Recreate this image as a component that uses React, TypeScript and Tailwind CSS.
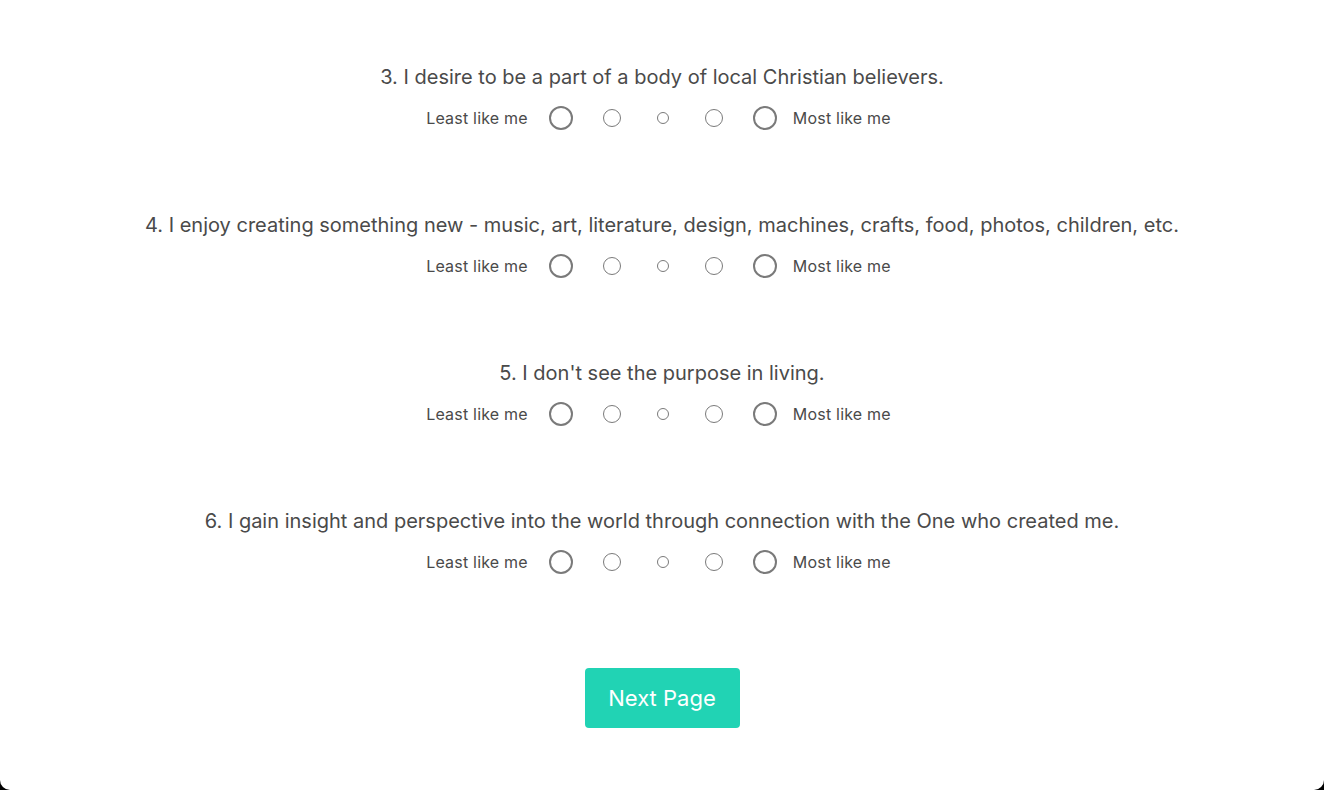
import { FC } from "react";

const preguntas = [
    "3. I desire to be a part of a body of local Christian believers.",
    "4. I enjoy creating something new - music, art, literature, design, machines, crafts, food, photos, children, etc.",
    "5. I don't see the purpose in living.",
    "6. I gain insight and perspective into the world through connection with the One who created me.",
]

const Opcion: FC<{ size: string }> = ({ size }) => (
    <div className="w-[51px] flex justify-center items-center">
        <span className={`rounded-full border-[#7a7a7a] bg-white ${size}`} />
    </div>
)

const Escala: FC = () => (
    <div className="flex items-center justify-center h-6 pr-[7px] text-base tracking-[0.2px] text-[#4a4a4a]">
        <span className="mr-[8px]">Least like me</span>
        <Opcion size="w-6 h-6 border-2" />
        <Opcion size="w-[18px] h-[18px] border-[1.5px]" />
        <Opcion size="w-3 h-3 border" />
        <Opcion size="w-[18px] h-[18px] border-[1.5px]" />
        <Opcion size="w-6 h-6 border-2" />
        <span className="ml-[2px]">Most like me</span>
    </div>
)

export default function App() {
    return (
        <div className="bg-black h-[790px] w-[1324px]" style={{ fontFamily: "Inter, 'Noto Sans', sans-serif" }}>
            <div className="bg-white h-full rounded-b-[10px] flex flex-col items-center pt-[63px]">
                <div className="flex flex-col gap-[81px] w-full">
                    {preguntas.map((p) => (
                        <div key={p} className="flex flex-col items-center gap-[15px]">
                            <p className="text-[20px] leading-7 text-[#4a4a4a]">{p}</p>
                            <Escala />
                        </div>
                    ))}
                </div>
                <button className="mt-[94px] w-[155px] h-[60px] rounded-[4px] bg-[#21d3b4] text-white text-[22px]">Next Page</button>
            </div>
        </div>
    )
}
